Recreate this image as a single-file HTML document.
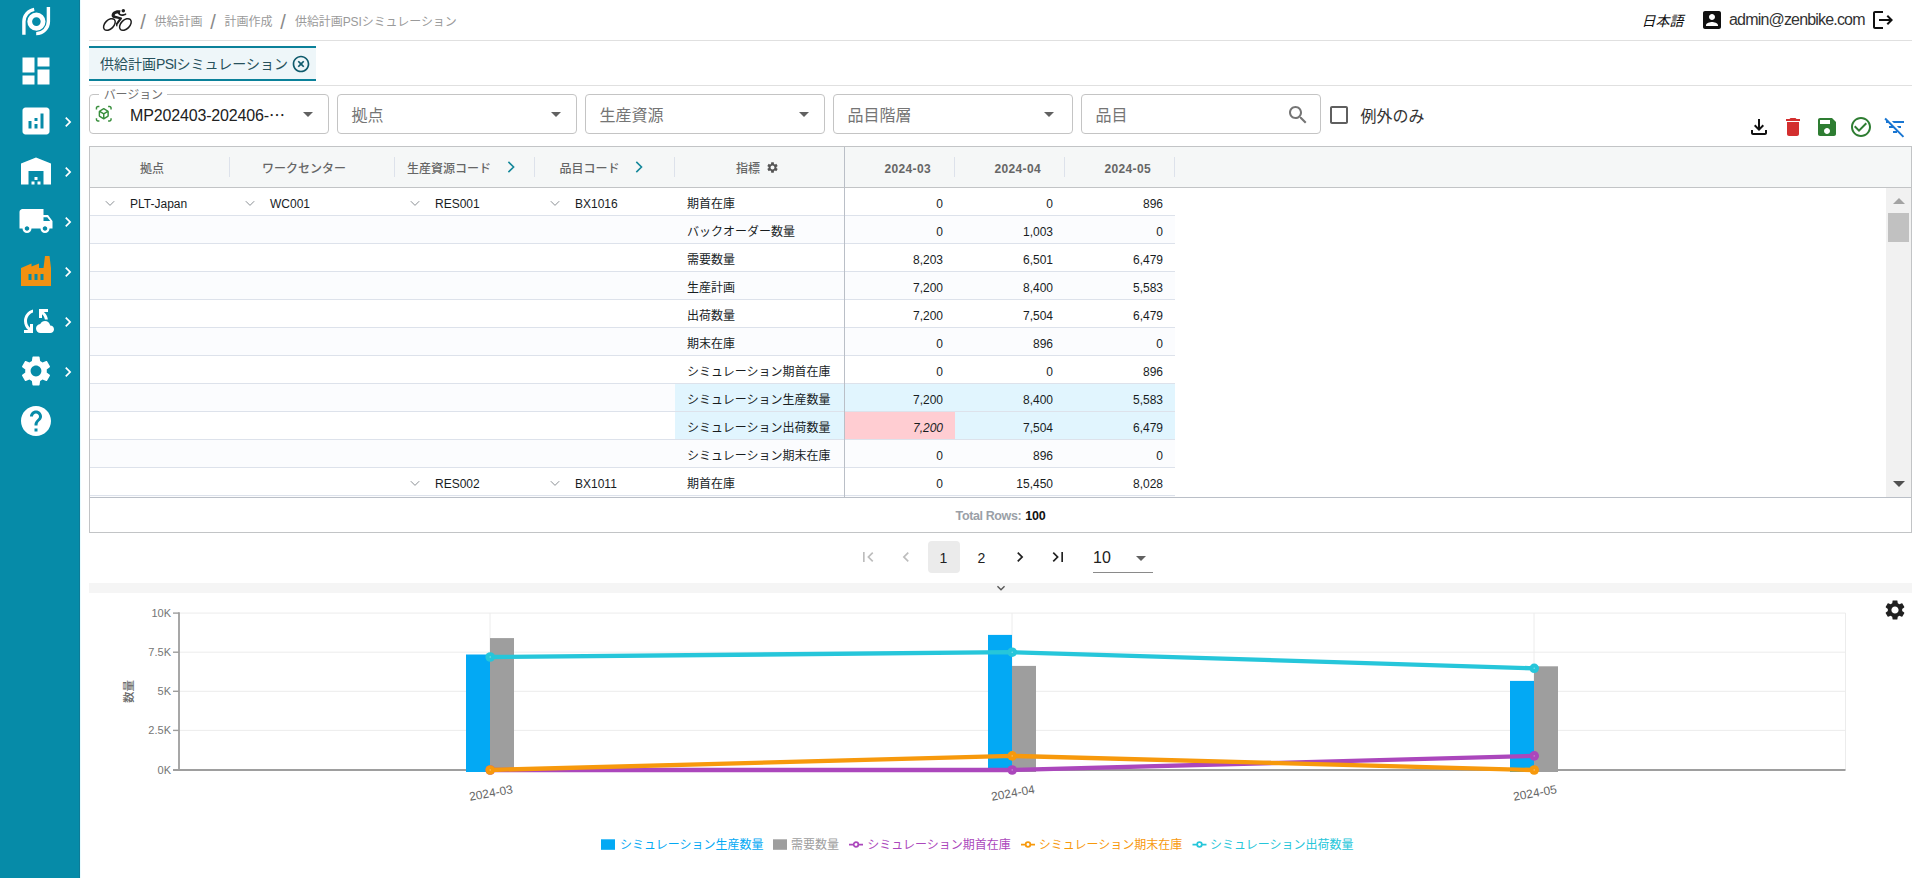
<!DOCTYPE html>
<html lang="ja"><head><meta charset="utf-8"><title>供給計画PSIシミュレーション</title>
<style>
html,body{margin:0;padding:0;}
body{width:1920px;height:878px;overflow:hidden;background:#fff;position:relative;font-family:"Liberation Sans","Noto Sans CJK JP",sans-serif;color:#212121;}
.ic{position:absolute;display:block;}
.t{position:absolute;white-space:nowrap;line-height:1;}
.box{position:absolute;box-sizing:border-box;}
#side{left:0;top:0;width:80px;height:878px;background:#068ba8;}
.sel{border:1px solid #c4c4c4;border-radius:4px;height:40px;width:240px;top:94px;background:#fff;}
.ph{font-size:16px;color:#757575;top:108px;}
.hd{font-size:12px;font-weight:500;color:#666;top:164px;}
.sep{width:1px;background:#dde2eb;top:157px;height:20px;}
.row{left:90px;width:1085px;height:28px;border-bottom:1px solid #dde2eb;}
.c{font-size:12px;color:#181d1f;}
.n{font-size:12px;color:#181d1f;text-align:right;width:90px;}
.pg{font-size:14px;color:#212121;}
</style></head><body>

<div id="side" class="box"></div><div class="box" style="left:79px;top:0;width:1px;height:878px;background:#0e7b96"></div><div class="box" style="left:80px;top:0;width:1px;height:878px;background:#e9fbff"></div>
<svg class="ic" style="left:18px;top:3px;width:36px;height:36px" viewBox="0 0 36 36" fill="none" stroke="#fff" stroke-linecap="butt">
<circle cx="18.4" cy="18.6" r="6.7" stroke-width="4.8"/>
<path d="M5.9 31.7V18.6A12.5 12.5 0 0 1 16.2 6.3" stroke-width="3.4"/>
<path d="M30.4 4V18.6A12 12 0 0 1 18.2 30.6" stroke-width="3.4"/>
</svg>
<svg class="ic" style="left:17.6px;top:52.7px;width:36px;height:36px" viewBox="0 0 24 24" fill="#fff" ><path d="M3 13h8V3H3v10zm0 8h8v-6H3v6zm10 0h8V11h-8v10zm0-18v6h8V3h-8z"/></svg>
<svg class="ic" style="left:17.6px;top:102.7px;width:36px;height:36px" viewBox="0 0 24 24" fill="#fff" ><path d="M19 3H5c-1.1 0-2 .9-2 2v14c0 1.1.9 2 2 2h14c1.1 0 2-.9 2-2V5c0-1.1-.9-2-2-2zM9 17H7v-5h2v5zm4 0h-2v-3h2v3zm0-5h-2v-2h2v2zm4 5h-2V7h2v10z"/></svg>
<svg class="ic" style="left:58.15px;top:111.7px;width:20px;height:20px" viewBox="0 0 24 24" fill="#fff" ><path d="M10 6 8.59 7.41 13.17 12l-4.58 4.59L10 18l6-6z"/></svg>
<svg class="ic" style="left:17.6px;top:152.7px;width:36px;height:36px" viewBox="0 0 24 24" fill="#fff" ><path d="M22 21V7L12 3 2 7v14h5v-9h10v9h5zm-11-2H9v2h2v-2zm2-3h-2v2h2v-2zm2 3h-2v2h2v-2z"/></svg>
<svg class="ic" style="left:58.15px;top:161.7px;width:20px;height:20px" viewBox="0 0 24 24" fill="#fff" ><path d="M10 6 8.59 7.41 13.17 12l-4.58 4.59L10 18l6-6z"/></svg>
<svg class="ic" style="left:17.6px;top:202.7px;width:36px;height:36px" viewBox="0 0 24 24" fill="#fff" ><path d="M20 8h-3V4H3c-1.1 0-2 .9-2 2v11h2c0 1.66 1.34 3 3 3s3-1.34 3-3h6c0 1.66 1.34 3 3 3s3-1.34 3-3h2v-5l-3-4zM6 18.5c-.83 0-1.5-.67-1.5-1.5s.67-1.5 1.5-1.5 1.5.67 1.5 1.5-.67 1.5-1.5 1.5zm13.5-9 1.96 2.5H17V9.5h2.5zm-1.5 9c-.83 0-1.5-.67-1.5-1.5s.67-1.5 1.5-1.5 1.5.67 1.5 1.5-.67 1.5-1.5 1.5z"/></svg>
<svg class="ic" style="left:58.15px;top:211.7px;width:20px;height:20px" viewBox="0 0 24 24" fill="#fff" ><path d="M10 6 8.59 7.41 13.17 12l-4.58 4.59L10 18l6-6z"/></svg>
<svg class="ic" style="left:17.6px;top:252.7px;width:36px;height:36px" viewBox="0 0 24 24" fill="#f29111" ><path d="M22 22H2V10l7-3v2l5-2v3h3l1-8h3l1 8v12zM7 14v4h2v-4H7zm4 0v4h2v-4h-2zm4 0v4h2v-4h-2z"/></svg>
<svg class="ic" style="left:58.15px;top:261.7px;width:20px;height:20px" viewBox="0 0 24 24" fill="#fff" ><path d="M10 6 8.59 7.41 13.17 12l-4.58 4.59L10 18l6-6z"/></svg>
<svg class="ic" style="left:17.6px;top:302.7px;width:36px;height:36px" viewBox="0 0 24 24" fill="#fff" ><path d="M21.5 14.98c-.02 0-.03 0-.05.01C21.2 13.3 19.76 12 18 12c-1.4 0-2.6.83-3.16 2.02C13.26 14.1 12 15.4 12 17c0 1.66 1.34 3 3 3l6.5-.02c1.38 0 2.5-1.12 2.5-2.5s-1.12-2.5-2.5-2.5zM10 4.26v2.09C7.67 7.18 6 9.39 6 12c0 1.77.78 3.34 2 4.44V14h2v6H4v-2h2.73C5.06 16.54 4 14.4 4 12c0-3.73 2.55-6.85 6-7.74zM20 6h-2.73c1.43 1.26 2.41 3.01 2.66 5h-2.02c-.23-1.36-.93-2.55-1.91-3.44V10h-2V4h6v2z"/></svg>
<svg class="ic" style="left:58.15px;top:311.7px;width:20px;height:20px" viewBox="0 0 24 24" fill="#fff" ><path d="M10 6 8.59 7.41 13.17 12l-4.58 4.59L10 18l6-6z"/></svg>
<svg class="ic" style="left:17.6px;top:352.7px;width:36px;height:36px" viewBox="0 0 24 24" fill="#fff" ><path d="M19.14 12.94c.04-.3.06-.61.06-.94 0-.32-.02-.64-.07-.94l2.03-1.58c.18-.14.23-.41.12-.61l-1.92-3.32c-.12-.22-.37-.29-.59-.22l-2.39.96c-.5-.38-1.03-.7-1.62-.94l-.36-2.54c-.04-.24-.24-.41-.48-.41h-3.84c-.24 0-.43.17-.47.41l-.36 2.54c-.59.24-1.13.57-1.62.94l-2.39-.96c-.22-.08-.47 0-.59.22L2.74 8.87c-.12.21-.08.47.12.61l2.03 1.58c-.05.3-.09.63-.09.94s.02.64.07.94l-2.03 1.58c-.18.14-.23.41-.12.61l1.92 3.32c.12.22.37.29.59.22l2.39-.96c.5.38 1.03.7 1.62.94l.36 2.54c.05.24.24.41.48.41h3.84c.24 0 .44-.17.47-.41l.36-2.54c.59-.24 1.13-.56 1.62-.94l2.39.96c.22.08.47 0 .59-.22l1.92-3.32c.12-.22.07-.47-.12-.61l-2.01-1.58zM12 15.6c-1.98 0-3.6-1.62-3.6-3.6s1.62-3.6 3.6-3.6 3.6 1.62 3.6 3.6-1.62 3.6-3.6 3.6z"/></svg>
<svg class="ic" style="left:58.15px;top:361.7px;width:20px;height:20px" viewBox="0 0 24 24" fill="#fff" ><path d="M10 6 8.59 7.41 13.17 12l-4.58 4.59L10 18l6-6z"/></svg>
<svg class="ic" style="left:17.6px;top:402.7px;width:36px;height:36px" viewBox="0 0 24 24" fill="#fff" ><path d="M12 2C6.48 2 2 6.48 2 12s4.48 10 10 10 10-4.48 10-10S17.52 2 12 2zm1 17h-2v-2h2v2zm2.07-7.75-.9.92C13.45 12.9 13 13.5 13 15h-2v-.5c0-1.1.45-2.1 1.17-2.83l1.24-1.26c.37-.36.59-.86.59-1.41 0-1.1-.9-2-2-2s-2 .9-2 2H8c0-2.21 1.79-4 4-4s4 1.79 4 4c0 .88-.36 1.68-.93 2.25z"/></svg>
<div class="box" style="left:89px;top:40px;width:1823px;height:1px;background:#e0e0e0"></div>
<svg class="ic" style="left:96px;top:4px;width:50px;height:32px" viewBox="0 0 50 32">
<g fill="none" stroke="#1e1e1e" stroke-width="1.5">
<ellipse cx="13.4" cy="20.5" rx="7" ry="4.4" transform="rotate(-45 13.4 20.5)"/>
<ellipse cx="29.4" cy="20.5" rx="7" ry="4.4" transform="rotate(-45 29.4 20.5)"/>
</g>
<circle cx="27.3" cy="6.8" r="1.75" fill="#1e1e1e"/>
<path d="M15.6 11.6C15.6 8 19.5 5.4 24.6 6.5L23.9 9.3C24.6 10.6 27.5 10.5 30 9.3L30.4 10.4C27.5 12.6 23.3 12.4 21.9 9.6C20.3 9.2 18.6 10 18.7 11.6L25.6 13.6C26.2 14 26.2 14.6 25.8 15.1L21.6 20.6L21.3 22.4L20.2 22.3L19.9 19.6L23 14.9L17.4 13.9C16.2 13.6 15.6 12.8 15.6 11.6Z" fill="#1e1e1e"/>
</svg>
<div class="t " style="left:140.29999999999998px;top:12px;font-size:20px;color:#8a8a8a">/</div>
<div class="t " style="left:210.29999999999998px;top:12px;font-size:20px;color:#8a8a8a">/</div>
<div class="t " style="left:280.2px;top:12px;font-size:20px;color:#8a8a8a">/</div>
<div class="t " style="left:154.5px;top:16.3px;font-size:12px;color:#9a9a9a">供給計画</div>
<div class="t " style="left:224.5px;top:16.3px;font-size:12px;color:#9a9a9a">計画作成</div>
<div class="t " style="left:295px;top:16.3px;font-size:12px;color:#9a9a9a;letter-spacing:-0.08px">供給計画PSIシミュレーション</div>
<div class="t " style="left:1641.5px;top:14px;font-size:14px;font-style:italic;color:#111">日本語</div>
<svg class="ic" style="left:1699.8px;top:8px;width:24px;height:24px" viewBox="0 0 24 24" fill="#111" ><path d="M3 5v14c0 1.1.89 2 2 2h14c1.1 0 2-.9 2-2V5c0-1.1-.9-2-2-2H5c-1.11 0-2 .9-2 2zm12 4c0 1.66-1.34 3-3 3s-3-1.34-3-3 1.34-3 3-3 3 1.34 3 3zm-9 8c0-2 4-3.1 6-3.1s6 1.1 6 3.1v1H6v-1z"/></svg>
<div class="t " style="left:1729px;top:11.5px;font-size:16px;color:#333;letter-spacing:-0.82px">admin@zenbike.com</div>
<svg class="ic" style="left:1871px;top:8px;width:24px;height:24px" viewBox="0 0 24 24" fill="#111" ><path d="m17 7-1.41 1.41L18.17 11H8v2h10.17l-2.58 2.58L17 17l5-5zM4 5h8V3H4c-1.1 0-2 .9-2 2v14c0 1.1.9 2 2 2h8v-2H4V5z"/></svg>
<div class="box" style="left:89px;top:46px;width:227px;height:35px;background:#eef6f9;border-top:2px solid #0b819a;border-bottom:2px solid #0b819a"></div>
<div class="t " style="left:100px;top:56.5px;font-size:14px;color:#27515c;letter-spacing:0">供給計画<span style="letter-spacing:-0.7px">PSI</span>シミュレーション</div>
<svg class="ic" style="left:291px;top:53.6px;width:20px;height:20px" viewBox="0 0 24 24" fill="#0e5a6c" ><path d="M14.59 8 12 10.59 9.41 8 8 9.41 10.59 12 8 14.59 9.41 16 12 13.41 14.59 16 16 14.59 13.41 12 16 9.41 14.59 8zM12 2C6.47 2 2 6.47 2 12s4.47 10 10 10 10-4.47 10-10S17.53 2 12 2zm0 18c-4.41 0-8-3.59-8-8s3.59-8 8-8 8 3.59 8 8-3.59 8-8 8z"/></svg>
<div class="box" style="left:89px;top:85px;width:1823px;height:1px;background:#e0e0e0"></div>
<div class="box sel" style="left:89px"></div>
<div class="box sel" style="left:337px"></div>
<div class="box sel" style="left:585px"></div>
<div class="box sel" style="left:833px"></div>
<div class="box sel" style="left:1081px"></div>
<div class="box" style="left:99px;top:90px;width:68px;height:10px;background:#fff"></div>
<div class="t " style="left:103.7px;top:88.5px;font-size:12px;color:#6e6e6e;letter-spacing:-0.1px">バージョン</div>
<svg class="ic" style="left:95.3px;top:105.2px;width:17.5px;height:17.5px" viewBox="0 0 24 24" fill="#388e3c" ><path d="M3 4c0-.55.45-1 1-1h2V1H4C2.34 1 1 2.34 1 4v2h2V4zm0 16v-2H1v2c0 1.66 1.34 3 3 3h2v-2H4c-.55 0-1-.45-1-1zM20 1h-2v2h2c.55 0 1 .45 1 1v2h2V4c0-1.66-1.34-3-3-3zm1 19c0 .55-.45 1-1 1h-2v2h2c1.66 0 3-1.34 3-3v-2h-2v2zm-2-5.13V9.13c0-.72-.38-1.38-1-1.73l-5-2.88c-.31-.18-.65-.27-1-.27s-.69.09-1 .27L6 7.39c-.62.36-1 1.02-1 1.74v5.74c0 .72.38 1.38 1 1.73l5 2.88c.31.18.65.27 1 .27s.69-.09 1-.27l5-2.88c.62-.35 1-1.01 1-1.73zm-8 2.3-4-2.3v-4.63l4 2.33v4.6zm1-6.33L8.04 8.53 12 6.25l3.96 2.28L12 10.84zm5 4.03-4 2.3v-4.6l4-2.33v4.63z"/></svg>
<div class="t " style="left:130px;top:108px;font-size:16px;color:#212121;letter-spacing:-0.15px">MP202403-202406-⋯</div>
<svg class="ic" style="left:296px;top:102px;width:24px;height:24px" viewBox="0 0 24 24" fill="#616161" ><path d="M7 10l5 5 5-5z"/></svg>
<svg class="ic" style="left:544px;top:102px;width:24px;height:24px" viewBox="0 0 24 24" fill="#616161" ><path d="M7 10l5 5 5-5z"/></svg>
<svg class="ic" style="left:792px;top:102px;width:24px;height:24px" viewBox="0 0 24 24" fill="#616161" ><path d="M7 10l5 5 5-5z"/></svg>
<svg class="ic" style="left:1037.2px;top:102px;width:24px;height:24px" viewBox="0 0 24 24" fill="#616161" ><path d="M7 10l5 5 5-5z"/></svg>
<div class="t ph" style="left:351.5px;top:108px;">拠点</div>
<div class="t ph" style="left:599.5px;top:108px;">生産資源</div>
<div class="t ph" style="left:847.5px;top:108px;">品目階層</div>
<div class="t ph" style="left:1095.5px;top:108px;">品目</div>
<svg class="ic" style="left:1286px;top:102.5px;width:24px;height:24px" viewBox="0 0 24 24" fill="#757575" ><path d="M15.5 14h-.79l-.28-.27C15.41 12.59 16 11.11 16 9.5 16 5.91 13.09 3 9.5 3S3 5.91 3 9.5 5.91 16 9.5 16c1.61 0 3.09-.59 4.23-1.57l.27.28v.79l5 4.99L20.49 19l-4.99-5zm-6 0C7.01 14 5 11.99 5 9.5S7.01 5 9.5 5 14 7.01 14 9.5 11.99 14 9.5 14z"/></svg>
<svg class="ic" style="left:1327px;top:103px;width:24px;height:24px" viewBox="0 0 24 24" fill="#5f5f5f" ><path d="M19 5v14H5V5h14m0-2H5c-1.1 0-2 .9-2 2v14c0 1.1.9 2 2 2h14c1.1 0 2-.9 2-2V5c0-1.1-.9-2-2-2z"/></svg>
<div class="t " style="left:1360.5px;top:108.5px;font-size:16px;color:#333">例外のみ</div>
<svg class="ic" style="left:1747px;top:115px;width:24px;height:24px" viewBox="0 0 24 24" fill="#111" ><path d="M18 15v3H6v-3H4v3c0 1.1.9 2 2 2h12c1.1 0 2-.9 2-2v-3h-2zm-1-4-1.41-1.41L13 12.17V4h-2v8.17L8.41 9.59 7 11l5 5 5-5z"/></svg>
<svg class="ic" style="left:1781px;top:115px;width:24px;height:24px" viewBox="0 0 24 24" fill="#d32f2f" ><path d="M6 19c0 1.1.9 2 2 2h8c1.1 0 2-.9 2-2V7H6v12zM19 4h-3.5l-1-1h-5l-1 1H5v2h14V4z"/></svg>
<svg class="ic" style="left:1815px;top:115px;width:24px;height:24px" viewBox="0 0 24 24" fill="#2e7d32" ><path d="M17 3H5c-1.11 0-2 .9-2 2v14c0 1.1.89 2 2 2h14c1.1 0 2-.9 2-2V7l-4-4zm-5 16c-1.66 0-3-1.34-3-3s1.34-3 3-3 3 1.34 3 3-1.34 3-3 3zm3-10H5V5h10v4z"/></svg>
<svg class="ic" style="left:1849px;top:115px;width:24px;height:24px" viewBox="0 0 24 24" fill="#2e7d32" ><path d="M16.59 7.58 10 14.17l-3.59-3.58L5 12l5 5 8-8zM12 2C6.48 2 2 6.48 2 12s4.48 10 10 10 10-4.48 10-10S17.52 2 12 2zm0 18c-4.42 0-8-3.58-8-8s3.58-8 8-8 8 3.58 8 8-3.58 8-8 8z"/></svg>
<svg class="ic" style="left:1883px;top:115px;width:24px;height:24px" viewBox="0 0 24 24" fill="#1976d2" ><path d="M10.83 8H21V6H8.83l2 2zm5 5H18v-2h-4.17l2 2zM14 16.830V18h-4v-2h3.17l-3-3H6v-2h2.17l-3-3H3V6h.17L1.39 4.22 2.8 2.810l18.380 18.380-1.410 1.410L14 16.830z"/></svg>
<div class="box" style="left:89px;top:146px;width:1823px;height:387px;border:1px solid #c2c4c6;background:#fff"></div>
<div class="box" style="left:90px;top:147px;width:1821px;height:41px;background:#f5f7f7;border-bottom:1px solid #c2c4c6"></div>
<div class="box" style="left:90px;top:188px;width:1797px;height:309px;overflow:hidden">
<div class="box row" style="left:0;top:0px;background:#fff">
<svg class="ic" style="left:15px;top:12px;width:10px;height:7px" viewBox="0 0 10 7" fill="none" stroke="#8a8f94" stroke-width="1"><path d="M0.8 1.2 5 5.4 9.2 1.2"/></svg>
<div class="t c" style="left:40px;top:10px">PLT-Japan</div>
<svg class="ic" style="left:155px;top:12px;width:10px;height:7px" viewBox="0 0 10 7" fill="none" stroke="#8a8f94" stroke-width="1"><path d="M0.8 1.2 5 5.4 9.2 1.2"/></svg>
<div class="t c" style="left:180px;top:10px">WC001</div>
<svg class="ic" style="left:320px;top:12px;width:10px;height:7px" viewBox="0 0 10 7" fill="none" stroke="#8a8f94" stroke-width="1"><path d="M0.8 1.2 5 5.4 9.2 1.2"/></svg>
<div class="t c" style="left:345px;top:10px">RES001</div>
<svg class="ic" style="left:460px;top:12px;width:10px;height:7px" viewBox="0 0 10 7" fill="none" stroke="#8a8f94" stroke-width="1"><path d="M0.8 1.2 5 5.4 9.2 1.2"/></svg>
<div class="t c" style="left:485px;top:10px">BX1016</div>
<div class="t c" style="left:597px;top:10px">期首在庫</div>
<div class="t n" style="left:763px;top:10px;">0</div>
<div class="t n" style="left:873px;top:10px;">0</div>
<div class="t n" style="left:983px;top:10px;">896</div>
</div>
<div class="box row" style="left:0;top:28px;background:#fbfcfe">
<div class="t c" style="left:597px;top:10px">バックオーダー数量</div>
<div class="t n" style="left:763px;top:10px;">0</div>
<div class="t n" style="left:873px;top:10px;">1,003</div>
<div class="t n" style="left:983px;top:10px;">0</div>
</div>
<div class="box row" style="left:0;top:56px;background:#fff">
<div class="t c" style="left:597px;top:10px">需要数量</div>
<div class="t n" style="left:763px;top:10px;">8,203</div>
<div class="t n" style="left:873px;top:10px;">6,501</div>
<div class="t n" style="left:983px;top:10px;">6,479</div>
</div>
<div class="box row" style="left:0;top:84px;background:#fbfcfe">
<div class="t c" style="left:597px;top:10px">生産計画</div>
<div class="t n" style="left:763px;top:10px;">7,200</div>
<div class="t n" style="left:873px;top:10px;">8,400</div>
<div class="t n" style="left:983px;top:10px;">5,583</div>
</div>
<div class="box row" style="left:0;top:112px;background:#fff">
<div class="t c" style="left:597px;top:10px">出荷数量</div>
<div class="t n" style="left:763px;top:10px;">7,200</div>
<div class="t n" style="left:873px;top:10px;">7,504</div>
<div class="t n" style="left:983px;top:10px;">6,479</div>
</div>
<div class="box row" style="left:0;top:140px;background:#fbfcfe">
<div class="t c" style="left:597px;top:10px">期末在庫</div>
<div class="t n" style="left:763px;top:10px;">0</div>
<div class="t n" style="left:873px;top:10px;">896</div>
<div class="t n" style="left:983px;top:10px;">0</div>
</div>
<div class="box row" style="left:0;top:168px;background:#fff">
<div class="t c" style="left:597px;top:10px">シミュレーション期首在庫</div>
<div class="t n" style="left:763px;top:10px;">0</div>
<div class="t n" style="left:873px;top:10px;">0</div>
<div class="t n" style="left:983px;top:10px;">896</div>
</div>
<div class="box row" style="left:0;top:196px;background:#fbfcfe">
<div class="box" style="left:585px;top:0;width:500px;height:27px;background:#e1f5fe"></div>
<div class="t c" style="left:597px;top:10px">シミュレーション生産数量</div>
<div class="t n" style="left:763px;top:10px;">7,200</div>
<div class="t n" style="left:873px;top:10px;">8,400</div>
<div class="t n" style="left:983px;top:10px;">5,583</div>
</div>
<div class="box row" style="left:0;top:224px;background:#fff">
<div class="box" style="left:585px;top:0;width:500px;height:27px;background:#e1f5fe"></div>
<div class="box" style="left:755px;top:0;width:110px;height:27px;background:#ffcdd2"></div>
<div class="t c" style="left:597px;top:10px">シミュレーション出荷数量</div>
<div class="t n" style="left:763px;top:10px;font-style:italic;">7,200</div>
<div class="t n" style="left:873px;top:10px;">7,504</div>
<div class="t n" style="left:983px;top:10px;">6,479</div>
</div>
<div class="box row" style="left:0;top:252px;background:#fbfcfe">
<div class="t c" style="left:597px;top:10px">シミュレーション期末在庫</div>
<div class="t n" style="left:763px;top:10px;">0</div>
<div class="t n" style="left:873px;top:10px;">896</div>
<div class="t n" style="left:983px;top:10px;">0</div>
</div>
<div class="box row" style="left:0;top:280px;background:#fff">
<svg class="ic" style="left:320px;top:12px;width:10px;height:7px" viewBox="0 0 10 7" fill="none" stroke="#8a8f94" stroke-width="1"><path d="M0.8 1.2 5 5.4 9.2 1.2"/></svg>
<div class="t c" style="left:345px;top:10px">RES002</div>
<svg class="ic" style="left:460px;top:12px;width:10px;height:7px" viewBox="0 0 10 7" fill="none" stroke="#8a8f94" stroke-width="1"><path d="M0.8 1.2 5 5.4 9.2 1.2"/></svg>
<div class="t c" style="left:485px;top:10px">BX1011</div>
<div class="t c" style="left:597px;top:10px">期首在庫</div>
<div class="t n" style="left:763px;top:10px;">0</div>
<div class="t n" style="left:873px;top:10px;">15,450</div>
<div class="t n" style="left:983px;top:10px;">8,028</div>
</div>
<div class="box row" style="left:0;top:308px;background:#fbfcfe">
<div class="t c" style="left:597px;top:10px"></div>
<div class="t n" style="left:763px;top:10px;"></div>
<div class="t n" style="left:873px;top:10px;"></div>
<div class="t n" style="left:983px;top:10px;"></div>
</div>
</div>
<div class="box" style="left:844px;top:147px;width:1px;height:350px;background:#babfc7"></div>
<div class="box sep" style="left:229px"></div>
<div class="box sep" style="left:394px"></div>
<div class="box sep" style="left:534px"></div>
<div class="box sep" style="left:674px"></div>
<div class="box sep" style="left:954px"></div>
<div class="box sep" style="left:1064px"></div>
<div class="box sep" style="left:1174px"></div>
<div class="t hd" style="left:140px;top:163px;">拠点</div>
<div class="t hd" style="left:262px;top:163px;">ワークセンター</div>
<div class="t hd" style="left:407px;top:163px;">生産資源コード</div>
<div class="t hd" style="left:559.5px;top:163px;">品目コード</div>
<div class="t hd" style="left:736px;top:163px;">指標</div>
<svg class="ic" style="left:505px;top:159px;width:12px;height:16px" viewBox="505 159 12 16" fill="none" stroke="#14879a" stroke-width="1.6"><path d="M508.4 161.9 513.6 167 508.4 172.1"/></svg>
<svg class="ic" style="left:633px;top:159px;width:12px;height:16px" viewBox="633 159 12 16" fill="none" stroke="#14879a" stroke-width="1.6"><path d="M636.3 161.9 641.5 167 636.3 172.1"/></svg>
<svg class="ic" style="left:765.5px;top:160.5px;width:13px;height:13px" viewBox="0 0 24 24" fill="#555" ><path d="M19.14 12.94c.04-.3.06-.61.06-.94 0-.32-.02-.64-.07-.94l2.03-1.58c.18-.14.23-.41.12-.61l-1.92-3.32c-.12-.22-.37-.29-.59-.22l-2.39.96c-.5-.38-1.03-.7-1.62-.94l-.36-2.54c-.04-.24-.24-.41-.48-.41h-3.84c-.24 0-.43.17-.47.41l-.36 2.54c-.59.24-1.13.57-1.62.94l-2.39-.96c-.22-.08-.47 0-.59.22L2.74 8.87c-.12.21-.08.47.12.61l2.03 1.58c-.05.3-.09.63-.09.94s.02.64.07.94l-2.03 1.58c-.18.14-.23.41-.12.61l1.92 3.32c.12.22.37.29.59.22l2.39-.96c.5.38 1.03.7 1.62.94l.36 2.54c.05.24.24.41.48.41h3.84c.24 0 .44-.17.47-.41l.36-2.54c.59-.24 1.13-.56 1.62-.94l2.39.96c.22.08.47 0 .59-.22l1.92-3.32c.12-.22.07-.47-.12-.61l-2.01-1.58zM12 15.6c-1.98 0-3.6-1.62-3.6-3.6s1.62-3.6 3.6-3.6 3.6 1.62 3.6 3.6-1.62 3.6-3.6 3.6z"/></svg>
<div class="t hd" style="left:884.5px;top:163px;letter-spacing:0.35px;font-weight:bold">2024-03</div>
<div class="t hd" style="left:994.5px;top:163px;letter-spacing:0.35px;font-weight:bold">2024-04</div>
<div class="t hd" style="left:1104.5px;top:163px;letter-spacing:0.35px;font-weight:bold">2024-05</div>
<div class="box" style="left:1886px;top:188px;width:25px;height:309px;background:#f1f1f1"></div>
<div class="box" style="left:1888px;top:213px;width:21px;height:29px;background:#c1c1c1"></div>
<svg class="ic" style="left:1892.5px;top:198px;width:12px;height:6px" viewBox="0 0 12 6"><path d="M0 6 6 0 12 6z" fill="#a3a3a3"/></svg>
<svg class="ic" style="left:1892.5px;top:481px;width:12px;height:6px" viewBox="0 0 12 6"><path d="M0 0 6 6 12 0z" fill="#505050"/></svg>
<div class="box" style="left:90px;top:497px;width:1821px;height:1px;background:#babfc7"></div>
<div class="t " style="left:955.6px;top:509.5px;font-size:12.5px;font-weight:bold;letter-spacing:-0.38px;color:#9a9fa7">Total Rows:</div>
<div class="t " style="left:1025.3px;top:509.5px;font-size:12.5px;font-weight:bold;letter-spacing:-0.2px;color:#111">100</div>
<div class="box" style="left:928px;top:541px;width:32px;height:32px;border-radius:4px;background:#ebebeb"></div>
<svg class="ic" style="left:858px;top:547px;width:20px;height:20px" viewBox="0 0 24 24" fill="#bdbdbd" ><path d="M18.41 16.59 13.82 12l4.59-4.59L17 6l-6 6 6 6zM6 6h2v12H6z"/></svg>
<svg class="ic" style="left:896px;top:547px;width:20px;height:20px" viewBox="0 0 24 24" fill="#bdbdbd" ><path d="M15.41 7.41 14 6l-6 6 6 6 1.41-1.41L10.83 12z"/></svg>
<svg class="ic" style="left:1010px;top:547px;width:20px;height:20px" viewBox="0 0 24 24" fill="#212121" ><path d="M10 6 8.59 7.41 13.17 12l-4.58 4.59L10 18l6-6z"/></svg>
<svg class="ic" style="left:1048px;top:547px;width:20px;height:20px" viewBox="0 0 24 24" fill="#212121" ><path d="M5.59 7.41 10.18 12l-4.59 4.59L7 18l6-6-6-6zM16 6h2v12h-2z"/></svg>
<div class="t pg" style="left:939.5px;top:551px;">1</div>
<div class="t pg" style="left:977.5px;top:551px;">2</div>
<div class="t " style="left:1093px;top:549.5px;font-size:16px;color:#212121">10</div>
<svg class="ic" style="left:1129px;top:545.5px;width:24px;height:24px" viewBox="0 0 24 24" fill="#616161" ><path d="M7 10l5 5 5-5z"/></svg>
<div class="box" style="left:1093px;top:572px;width:60px;height:1px;background:#8a8a8a"></div>
<div class="box" style="left:89px;top:583px;width:1823px;height:10px;background:#f5f5f5"></div>
<svg class="ic" style="left:992.7px;top:579.7px;width:16px;height:16px" viewBox="0 0 24 24" fill="#555" ><path d="M16.59 8.59 12 13.17 7.41 8.59 6 10l6 6 6-6z"/></svg>
<svg class="ic" style="left:1883px;top:598px;width:24px;height:24px" viewBox="0 0 24 24" fill="#212121" ><path d="M19.14 12.94c.04-.3.06-.61.06-.94 0-.32-.02-.64-.07-.94l2.03-1.58c.18-.14.23-.41.12-.61l-1.92-3.32c-.12-.22-.37-.29-.59-.22l-2.39.96c-.5-.38-1.03-.7-1.62-.94l-.36-2.54c-.04-.24-.24-.41-.48-.41h-3.84c-.24 0-.43.17-.47.41l-.36 2.54c-.59.24-1.13.57-1.62.94l-2.39-.96c-.22-.08-.47 0-.59.22L2.74 8.87c-.12.21-.08.47.12.61l2.03 1.58c-.05.3-.09.63-.09.94s.02.64.07.94l-2.03 1.58c-.18.14-.23.41-.12.61l1.92 3.32c.12.22.37.29.59.22l2.39-.96c.5.38 1.03.7 1.62.94l.36 2.54c.05.24.24.41.48.41h3.84c.24 0 .44-.17.47-.41l.36-2.54c.59-.24 1.13-.56 1.62-.94l2.39.96c.22.08.47 0 .59-.22l1.92-3.32c.12-.22.07-.47-.12-.61l-2.01-1.58zM12 15.6c-1.98 0-3.6-1.62-3.6-3.6s1.62-3.6 3.6-3.6 3.6 1.62 3.6 3.6-1.62 3.6-3.6 3.6z"/></svg>
<svg class="ic" style="left:80px;top:593px;width:1840px;height:285px" viewBox="80 593 1840 285" font-family='"Liberation Sans","Noto Sans CJK JP",sans-serif'>
<line x1="180" x2="1845.5" y1="613.1" y2="613.1" stroke="#ececec" stroke-width="1"/>
<line x1="180" x2="1845.5" y1="652.2" y2="652.2" stroke="#ececec" stroke-width="1"/>
<line x1="180" x2="1845.5" y1="691.3" y2="691.3" stroke="#ececec" stroke-width="1"/>
<line x1="180" x2="1845.5" y1="730.4" y2="730.4" stroke="#ececec" stroke-width="1"/>
<line x1="490" x2="490" y1="613" y2="770" stroke="#ececec" stroke-width="1"/>
<line x1="1012" x2="1012" y1="613" y2="770" stroke="#ececec" stroke-width="1"/>
<line x1="1534" x2="1534" y1="613" y2="770" stroke="#ececec" stroke-width="1"/>
<line x1="1845.5" x2="1845.5" y1="613" y2="770" stroke="#ececec" stroke-width="1"/>
<line x1="179" x2="179" y1="612.3" y2="771" stroke="#9e9e9e" stroke-width="1.8"/>
<line x1="173" x2="1845.5" y1="770" y2="770" stroke="#9e9e9e" stroke-width="1.8"/>
<rect x="466" y="654.5" width="24" height="117.5" fill="#03a9f4"/>
<rect x="490" y="638.1" width="24" height="133.9" fill="#9e9e9e"/>
<rect x="988" y="634.9" width="24" height="137.1" fill="#03a9f4"/>
<rect x="1012" y="665.9" width="24" height="106.1" fill="#9e9e9e"/>
<rect x="1510" y="680.9" width="24" height="91.1" fill="#03a9f4"/>
<rect x="1534" y="666.3" width="24" height="105.7" fill="#9e9e9e"/>
<line x1="173" x2="179" y1="613.1" y2="613.1" stroke="#9e9e9e" stroke-width="1.4"/>
<text x="171" y="617.1" text-anchor="end" font-size="11" fill="#757575">10K</text>
<line x1="173" x2="179" y1="652.2" y2="652.2" stroke="#9e9e9e" stroke-width="1.4"/>
<text x="171" y="656.2" text-anchor="end" font-size="11" fill="#757575">7.5K</text>
<line x1="173" x2="179" y1="691.3" y2="691.3" stroke="#9e9e9e" stroke-width="1.4"/>
<text x="171" y="695.3" text-anchor="end" font-size="11" fill="#757575">5K</text>
<line x1="173" x2="179" y1="730.4" y2="730.4" stroke="#9e9e9e" stroke-width="1.4"/>
<text x="171" y="734.4" text-anchor="end" font-size="11" fill="#757575">2.5K</text>
<text x="171" y="774" text-anchor="end" font-size="11" fill="#757575">0K</text>
<text transform="translate(133,691.5) rotate(-90)" text-anchor="middle" font-size="11.5" font-weight="500" fill="#6b6b6b">数量</text>
<polyline points="490,770.0 1012,770.0 1534,755.9" fill="none" stroke="#ab47bc" stroke-width="4.3" stroke-linejoin="round"/>
<circle cx="490.2" cy="770.0" r="4.8" fill="#ab47bc"/><circle cx="490.2" cy="770.0" r="0.7" fill="#fff" fill-opacity="0.45"/>
<circle cx="1012.2" cy="770.0" r="4.8" fill="#ab47bc"/><circle cx="1012.2" cy="770.0" r="0.7" fill="#fff" fill-opacity="0.45"/>
<circle cx="1534.2" cy="755.9" r="4.8" fill="#ab47bc"/><circle cx="1534.2" cy="755.9" r="0.7" fill="#fff" fill-opacity="0.45"/>
<polyline points="490,770.0 1012,755.9 1534,770.0" fill="none" stroke="#f7990c" stroke-width="4.3" stroke-linejoin="round"/>
<circle cx="490.2" cy="770.0" r="4.8" fill="#f7990c"/><circle cx="490.2" cy="770.0" r="0.7" fill="#fff" fill-opacity="0.45"/>
<circle cx="1012.2" cy="755.9" r="4.8" fill="#f7990c"/><circle cx="1012.2" cy="755.9" r="0.7" fill="#fff" fill-opacity="0.45"/>
<circle cx="1534.2" cy="770.0" r="4.8" fill="#f7990c"/><circle cx="1534.2" cy="770.0" r="0.7" fill="#fff" fill-opacity="0.45"/>
<polyline points="490,657.0 1012,652.2 1534,668.3" fill="none" stroke="#26c6da" stroke-width="4.3" stroke-linejoin="round"/>
<circle cx="490.2" cy="657.0" r="4.8" fill="#26c6da"/><circle cx="490.2" cy="657.0" r="0.7" fill="#fff" fill-opacity="0.45"/>
<circle cx="1012.2" cy="652.2" r="4.8" fill="#26c6da"/><circle cx="1012.2" cy="652.2" r="0.7" fill="#fff" fill-opacity="0.45"/>
<circle cx="1534.2" cy="668.3" r="4.8" fill="#26c6da"/><circle cx="1534.2" cy="668.3" r="0.7" fill="#fff" fill-opacity="0.45"/>
<text transform="translate(491.6,797) rotate(-10)" text-anchor="middle" font-size="12" fill="#666">2024-03</text>
<text transform="translate(1013.6,797) rotate(-10)" text-anchor="middle" font-size="12" fill="#666">2024-04</text>
<text transform="translate(1535.6,797) rotate(-10)" text-anchor="middle" font-size="12" fill="#666">2024-05</text>
<rect x="601" y="839.3" width="14" height="10.5" fill="#03a9f4"/>
<text x="620" y="849" font-size="12" fill="#03a9f4">シミュレーション生産数量</text>
<rect x="773" y="839.3" width="14" height="10.5" fill="#9e9e9e"/>
<text x="791" y="849" font-size="12" fill="#9e9e9e">需要数量</text>
<path d="M849 844.5h4.67a2.33 2.33 0 1 1 4.66 0h4.67M858.33 844.5a2.33 2.33 0 1 1 -4.66 0" fill="none" stroke="#ab47bc" stroke-width="1.75"/>
<text x="867.3" y="849" font-size="12" fill="#ab47bc">シミュレーション期首在庫</text>
<path d="M1021 844.5h4.67a2.33 2.33 0 1 1 4.66 0h4.67M1030.33 844.5a2.33 2.33 0 1 1 -4.66 0" fill="none" stroke="#f7990c" stroke-width="1.75"/>
<text x="1038.7" y="849" font-size="12" fill="#f7990c">シミュレーション期末在庫</text>
<path d="M1192.5 844.5h4.67a2.33 2.33 0 1 1 4.66 0h4.67M1201.83 844.5a2.33 2.33 0 1 1 -4.66 0" fill="none" stroke="#26c6da" stroke-width="1.75"/>
<text x="1210" y="849" font-size="12" fill="#26c6da">シミュレーション出荷数量</text>
</svg>
</body></html>
